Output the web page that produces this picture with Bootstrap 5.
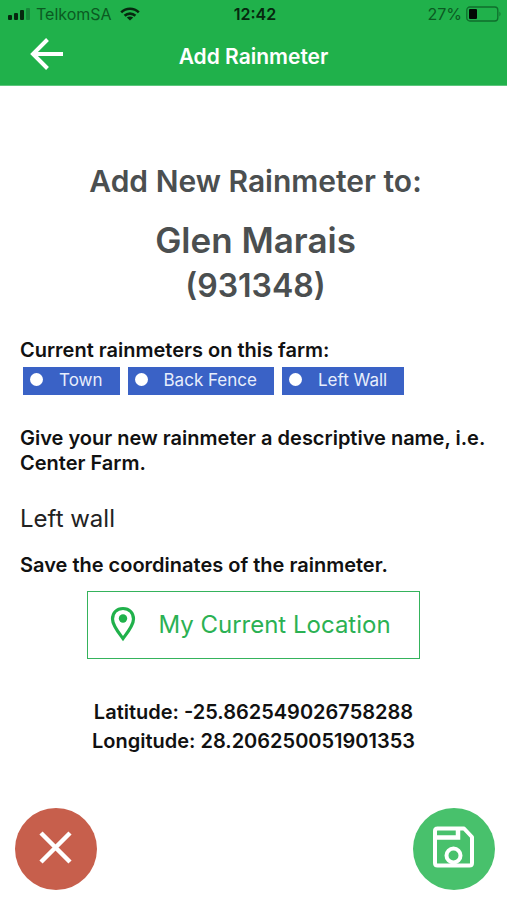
<!DOCTYPE html>
<html lang="en">
<head>
<meta charset="utf-8">
<meta name="viewport" content="width=device-width, initial-scale=1">
<title>Add Rainmeter</title>
<link href="https://cdn.jsdelivr.net/npm/bootstrap@5.3.0/dist/css/bootstrap.min.css" rel="stylesheet">
<style>
  body { font-family: Inter, "Liberation Sans", sans-serif; color: #111; background: #fff; font-size: 20px; line-height: 25px; }
  .app-header { background: #20b14b; border-bottom: 1px solid #5cc67c; }
  .status-bar { height: 28px; font-size: 16px; color: #0b5a22; padding: 0 5px 0 8px; }
  .status-bar .clock { color: #06280f; font-weight: 600; }
  .title-bar { height: 57px; padding: 0 27px; }
  .title-bar h1 { font-size: 21px; line-height: 28px; font-weight: 600; }
  .icon-btn { width: 40px; height: 40px; }
  .farm { color: #4b4f50; padding: 76px 0 0 4px; }
  .farm h2 { font-size: 30px; line-height: 38px; font-weight: 600; margin-bottom: 16px; }
  .farm .farm-name { font-size: 35px; line-height: 48px; font-weight: 600; }
  .farm .farm-code { font-size: 32px; line-height: 44px; font-weight: 600; }
  .form-area { padding: 30px 20px 0; }
  .form-area p, .form-area label { font-weight: 600; }
  .form-area label { margin-right: -8px; }
  .chips { padding: 4px 3px 0; gap: 8px; margin-bottom: 31px; }
  .chip { background: #3a62c6; color: #e8eefc; height: 28px; font-size: 17px; line-height: 24px; padding: 0 17px 3px 7px; gap: 16px; }
  .chip-dot { width: 13px; height: 13px; background: #fff; }
  .name-input { font-size: 24px; line-height: 32px; margin: 27px 0 18px; color: #222; }
  .btn-location { border: 1px solid #35b35c; border-radius: 0; color: #2bb153; font-size: 24px; line-height: 32px; height: 68px; padding: 0 28px 0 20px; gap: 20px; margin-top: 13px; }
  .btn-location:hover { color: #fff; background: #20b14b; }
  .coords { margin-top: 39px; line-height: 29px; font-weight: 600; }
  .actions { padding: 16px 12px 10px 15px; }
  .btn-round { width: 82px; height: 82px; padding-bottom: 11px; }
  .btn-cancel { background: #c75f4c; }
  .btn-save { background: #48c16c; }
</style>
</head>
<body>
<div class="d-flex flex-column min-vh-100">
  <header class="app-header">
    <div class="status-bar row gx-0 align-items-center">
      <div class="col d-flex align-items-center">
        <svg width="24" height="14" viewBox="0 0 24 14" aria-hidden="true">
          <g fill="#06280f"><rect x="0" y="8" width="4" height="5" rx="1"/><rect x="6" y="6" width="4" height="7" rx="1"/><rect x="12" y="3" width="4" height="10" rx="1"/></g>
          <rect x="18" y="1" width="4" height="12" rx="1" fill="#16883a"/>
        </svg>
        <span class="ms-1">TelkomSA</span>
        <svg class="ms-2" width="20" height="14" viewBox="0 0 20 14" aria-hidden="true">
          <g fill="none" stroke="#06280f" stroke-width="2.6"><path d="M1.2 5.4C6.2.6 13.8.6 18.8 5.4"/><path d="M4.6 8.8c3-2.9 7.8-2.9 10.8 0"/></g>
          <path d="M10 13.6 6.8 10.6c1.8-1.6 4.6-1.6 6.4 0z" fill="#06280f"/>
        </svg>
      </div>
      <div class="col-auto clock">12:42</div>
      <div class="col d-flex align-items-center justify-content-end">
        <span>27%</span>
        <svg class="ms-1" width="36" height="16" viewBox="0 0 36 16" aria-hidden="true">
          <rect x=".8" y="1" width="31" height="14" rx="3" fill="none" stroke="#0f6e2c" stroke-width="1.3"/>
          <rect x="3" y="3" width="8" height="10" rx="1" fill="#020a04"/>
          <path d="M33.5 5.500q2 2.500 0 5z" fill="#0f6e2c"/>
        </svg>
      </div>
    </div>
    <div class="title-bar row gx-0 align-items-center">
      <div class="col">
        <button type="button" class="icon-btn btn p-0 border-0" aria-label="Back">
          <svg class="d-block" width="40" height="40" viewBox="0 0 40 40" fill="none" stroke="#fff" stroke-width="4" aria-hidden="true"><path d="M36 17H6M20.500 2.500 6 17l14.500 14.500"/></svg>
        </button>
      </div>
      <h1 class="col-auto m-0 text-white">Add Rainmeter</h1>
      <div class="col"></div>
    </div>
  </header>

  <main class="flex-grow-1">
    <section class="farm text-center">
      <h2>Add New Rainmeter to:</h2>
      <div class="farm-name">Glen Marais</div>
      <div class="farm-code">(931348)</div>
    </section>
    <section class="form-area">
      <p class="m-0">Current rainmeters on this farm:</p>
      <ul class="chips list-unstyled d-flex flex-wrap">
        <li class="chip d-flex align-items-center"><span class="chip-dot rounded-circle"></span>Town</li>
        <li class="chip d-flex align-items-center"><span class="chip-dot rounded-circle"></span>Back Fence</li>
        <li class="chip d-flex align-items-center"><span class="chip-dot rounded-circle"></span>Left Wall</li>
      </ul>
      <label class="d-block" for="meter-name">Give your new rainmeter a descriptive name, i.e. Center Farm.</label>
      <input id="meter-name" class="name-input form-control-plaintext p-0 border-0" type="text" value="Left wall">
      <p class="m-0">Save the coordinates of the rainmeter.</p>
      <div class="text-center">
        <button type="button" class="btn btn-location d-inline-flex align-items-center">
          <svg width="30" height="38" viewBox="0 0 30 38" aria-hidden="true">
            <path d="M15 2.500C8.500 2.500 4.500 7 4.500 13c0 6.500 6 13.500 10.500 19.500C19.500 26.500 25.500 19.500 25.500 13 25.500 7 21.500 2.500 15 2.500z" fill="none" stroke="#20b14b" stroke-width="3.200"/>
            <circle cx="15" cy="12.500" r="4.200" fill="#20b14b"/>
          </svg>
          <span>My Current Location</span>
        </button>
      </div>
      <div class="coords text-center">
        <div>Latitude: -25.862549026758288</div>
        <div>Longitude: 28.206250051901353</div>
      </div>
    </section>
  </main>

  <footer class="actions d-flex justify-content-between">
    <button type="button" class="btn btn-round btn-cancel rounded-circle border-0 d-flex align-items-center justify-content-center" aria-label="Cancel">
      <svg class="flex-shrink-0" width="40" height="40" viewBox="0 0 40 40" stroke="#fff" stroke-width="4.500" aria-hidden="true"><path d="M5 6 34 35M34 6 5 35"/></svg>
    </button>
    <button type="button" class="btn btn-round btn-save rounded-circle border-0 d-flex align-items-center justify-content-center" aria-label="Save">
      <svg class="flex-shrink-0" width="42" height="42" viewBox="0 0 42 42" fill="none" stroke="#fff" stroke-width="4" stroke-linejoin="round" aria-hidden="true">
        <path d="M4 2.500h27l8 8.500v26q0 2.500-2.500 2.500H4.500Q2 39.500 2 37V5q0-2.500 2.500-2.500z"/>
        <path d="M2 11.500h23V3" stroke-linejoin="miter" stroke-width="4.500"/>
        <circle cx="20.500" cy="29.500" r="7"/>
      </svg>
    </button>
  </footer>
</div>
<script src="https://cdn.jsdelivr.net/npm/bootstrap@5.3.0/dist/js/bootstrap.bundle.min.js"></script>
</body>
</html>
